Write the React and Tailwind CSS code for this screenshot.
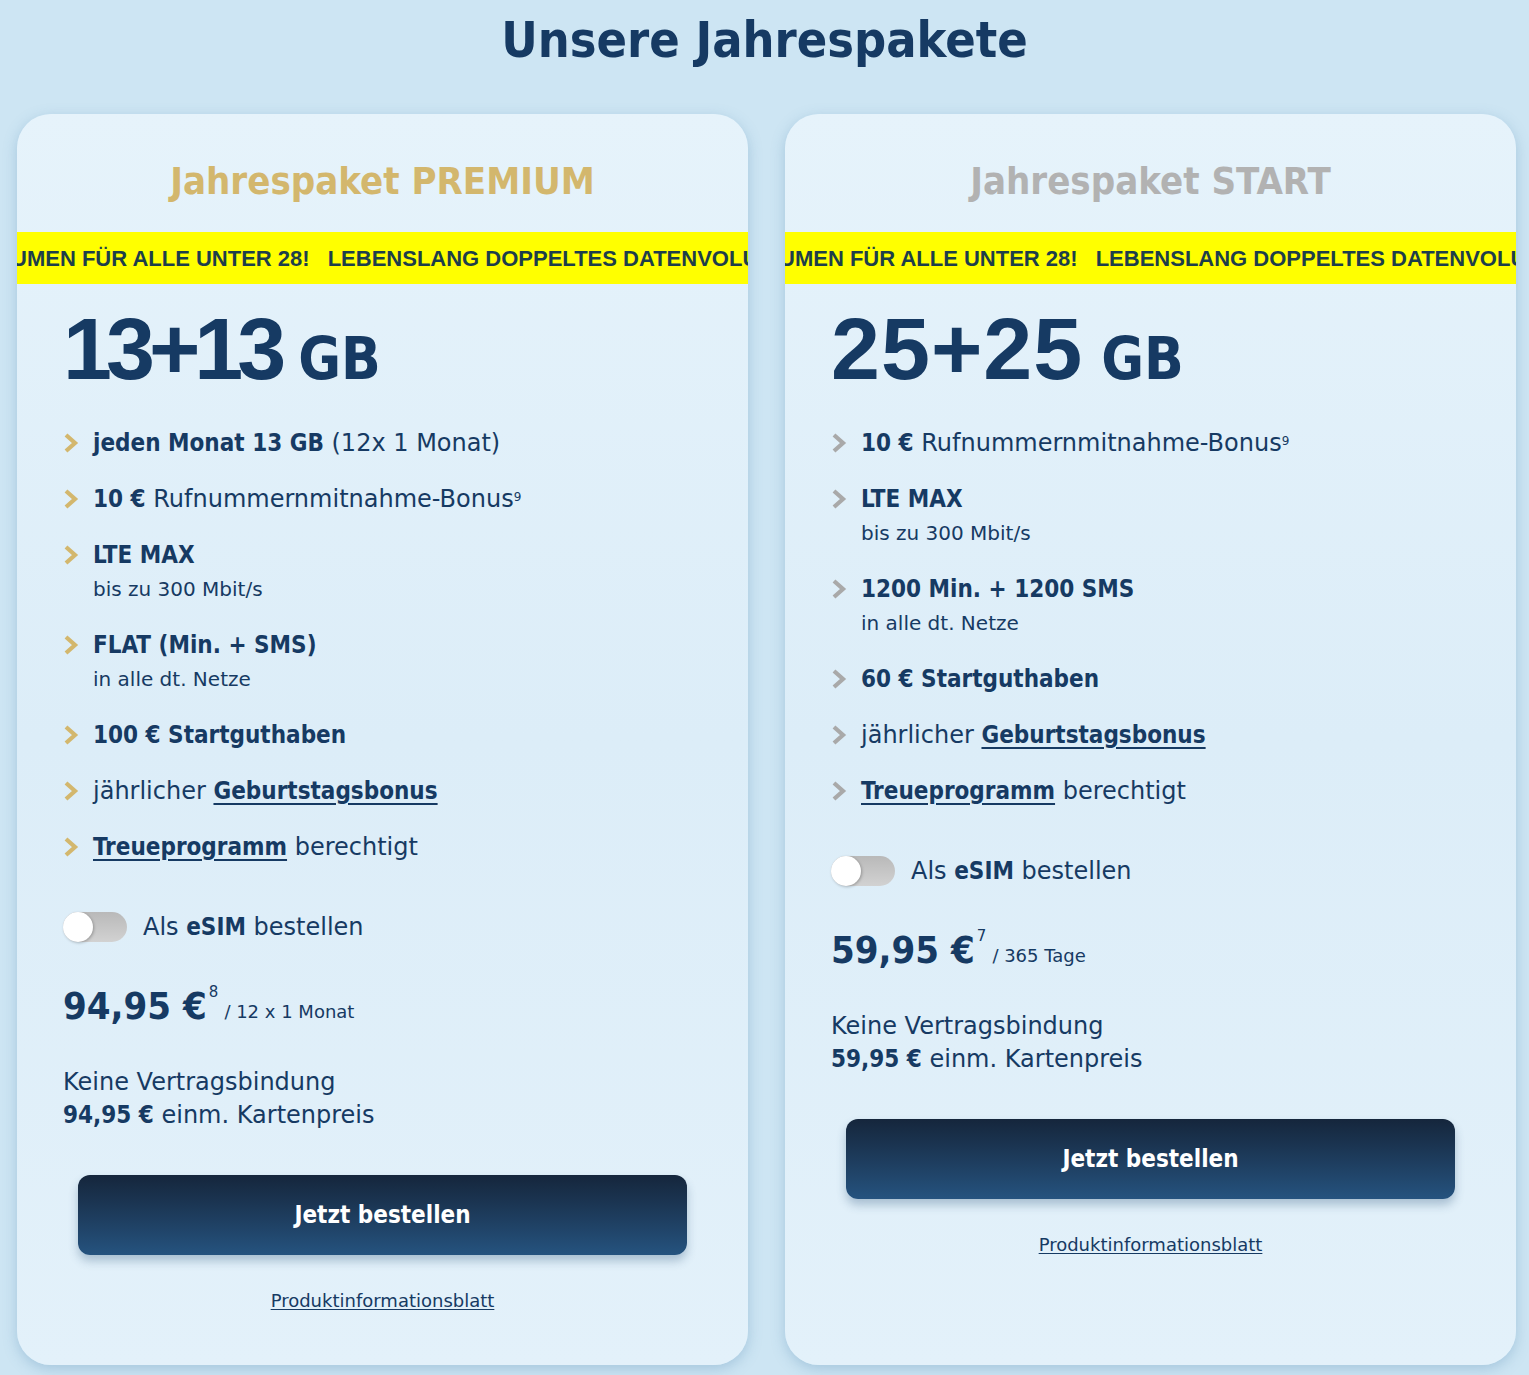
import React from "react";

const BOLD = "font-['DejaVu_Sans_Condensed','Liberation_Sans',sans-serif] font-bold";

const Chevron = ({ color }) => (
  <svg width="16" height="22" viewBox="0 0 16 22" className="shrink-0">
    <polyline points="3,3 12,11 3,19" fill="none" stroke={color} strokeWidth="4.2" strokeLinecap="butt" strokeLinejoin="miter" />
  </svg>
);

const B = ({ children, u }) => (
  <span className={`${BOLD} ${u ? "underline underline-offset-4 decoration-2" : ""}`}>{children}</span>
);

const Item = ({ color, children, sub }) => (
  <li className="flex items-start gap-[14px]">
    <div className="h-[34px] flex items-center"><Chevron color={color} /></div>
    <div>
      <div className="text-[24px] leading-[34px] text-[#163a63]">{children}</div>
      {sub && <div className="text-[20px] leading-[34px] text-[#163a63]">{sub}</div>}
    </div>
  </li>
);

const Toggle = () => (
  <div className="relative w-[64px] h-[30px] rounded-full bg-gradient-to-b from-[#b9b9b9] to-[#d2d2d2] shrink-0">
    <div className="absolute left-0 top-0 w-[30px] h-[30px] rounded-full bg-white shadow-[1px_1px_3px_rgba(0,0,0,0.25)]" />
  </div>
);

const Card = ({ title, titleColor, chevron, big, bigTrack, items, price, sup, per }) => (
  <div className="w-[731px] h-[1251px] rounded-[34px] overflow-hidden bg-gradient-to-b from-[#e6f3fb] via-[#dcedf8] to-[#e3f1fa] shadow-[0_4px_14px_rgba(90,140,180,0.35)] flex flex-col">
    <h2 className={`pt-[45px] text-center text-[38px] leading-[44px] ${BOLD} ${titleColor}`}>{title}</h2>
    <div className="mt-[29px] h-[52px] bg-[#ffff00] flex items-center overflow-hidden whitespace-nowrap">
      <span className="ml-[-6px] text-[22px] font-bold text-[#1d3e4a] font-['Liberation_Sans',sans-serif]">
        UMEN FÜR ALLE UNTER 28!<span className="inline-block w-[18px]" />LEBENSLANG DOPPELTES DATENVOLUMEN FÜR ALLE UNTER 28!
      </span>
    </div>
    <div className="px-[46px]">
      <div className="mt-[20px] flex items-baseline text-[#163a63] leading-[90px]">
        <span className={`text-[88px] font-bold font-['Liberation_Sans',sans-serif] ${bigTrack}`}>{big}</span>
        <span className={`ml-[18px] text-[58px] ${BOLD}`}>GB</span>
      </div>
      <ul className="mt-[22px] flex flex-col gap-[22px]">
        {items.map((it, i) => (
          <Item key={i} color={chevron} sub={it.sub}>{it.main}</Item>
        ))}
      </ul>
      <div className="mt-[46px] flex items-center gap-[16px]">
        <Toggle />
        <span className="text-[24px] leading-[34px] text-[#163a63]">Als <B>eSIM</B> bestellen</span>
      </div>
      <div className="mt-[40px] h-[44px] flex items-end text-[#163a63]">
        <span className={`text-[38px] leading-[44px] ${BOLD}`}>{price} €</span>
        <span className="self-start text-[15px] leading-[15px] ml-[2px] mt-[1px]">{sup}</span>
        <span className="ml-[6px] text-[18px] leading-[32px]">/ {per}</span>
      </div>
      <div className="mt-[38px] text-[24px] leading-[33px] text-[#163a63]">
        <div>Keine Vertragsbindung</div>
        <div><B>{price} €</B> einm. Kartenpreis</div>
      </div>
    </div>
    <button className={`mt-[43px] mx-[61px] h-[80px] rounded-[12px] bg-gradient-to-b from-[#15263c] to-[#25537f] shadow-[0_6px_10px_rgba(40,80,120,0.3)] text-white text-[24px] ${BOLD}`}>
      Jetzt bestellen
    </button>
    <div className="mt-[33px] text-center">
      <a className="text-[18px] leading-[26px] text-[#163a63] underline underline-offset-2">Produktinformationsblatt</a>
    </div>
  </div>
);

export default function App() {
  const sup9 = <sup className="text-[12px]">9</sup>;
  const premiumItems = [
    { main: <><B>jeden Monat 13 GB</B> (12x 1 Monat)</> },
    { main: <><B>10 €</B> Rufnummernmitnahme-Bonus{sup9}</> },
    { main: <B>LTE MAX</B>, sub: "bis zu 300 Mbit/s" },
    { main: <B>FLAT (Min. + SMS)</B>, sub: "in alle dt. Netze" },
    { main: <B>100 € Startguthaben</B> },
    { main: <>jährlicher <B u>Geburtstagsbonus</B></> },
    { main: <><B u>Treueprogramm</B> berechtigt</> },
  ];
  const startItems = [
    { main: <><B>10 €</B> Rufnummernmitnahme-Bonus{sup9}</> },
    { main: <B>LTE MAX</B>, sub: "bis zu 300 Mbit/s" },
    { main: <B>1200 Min. + 1200 SMS</B>, sub: "in alle dt. Netze" },
    { main: <B>60 € Startguthaben</B> },
    { main: <>jährlicher <B u>Geburtstagsbonus</B></> },
    { main: <><B u>Treueprogramm</B> berechtigt</> },
  ];
  return (
    <div className="min-h-[1375px] bg-[#cde5f3] font-['DejaVu_Sans',sans-serif]">
      <h1 className={`pt-[12px] text-center text-[50px] leading-[56px] text-[#163a63] ${BOLD}`}>Unsere Jahrespakete</h1>
      <div className="mt-[46px] flex gap-[37px] pl-[17px] items-start">
        <Card title="Jahrespaket PREMIUM" titleColor="text-[#d3b76d]" chevron="#d3b76d" big="13+13" bigTrack="tracking-[-6px]" items={premiumItems} price="94,95" sup="8" per="12 x 1 Monat" />
        <Card title="Jahrespaket START" titleColor="text-[#b2b2b2]" chevron="#a9a9a9" big="25+25" bigTrack="tracking-[1px]" items={startItems} price="59,95" sup="7" per="365 Tage" />
      </div>
    </div>
  );
}
